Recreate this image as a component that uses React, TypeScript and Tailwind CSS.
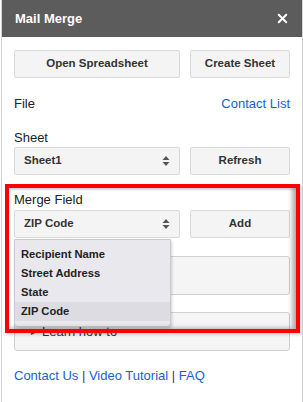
import { X } from 'lucide-react';

const btn =
  'h-[28px] flex items-center justify-center rounded-[2px] border border-[#d9d9d9] bg-[#f4f4f4] text-[11.5px] font-bold text-[#333]';

function UpDown() {
  return (
    <svg width="8" height="12" viewBox="0 0 8 12" className="shrink-0">
      <path d="M4 1 L7.5 5 H0.5 Z" fill="#555" />
      <path d="M4 11 L7.5 7 H0.5 Z" fill="#555" />
    </svg>
  );
}

function SelectBox({ value }: { value: string }) {
  return (
    <div className="h-[28px] w-[166px] flex items-center justify-between rounded-[2px] border border-[#d9d9d9] bg-[#f4f4f4] pl-[9px] pr-[9px]">
      <span className="text-[11.5px] font-bold text-[#333]">{value}</span>
      <UpDown />
    </div>
  );
}

const OPTIONS = ['Recipient Name', 'Street Address', 'State', 'ZIP Code'];

export default function App() {
  return (
    <div className="relative w-[303px] h-[402px] overflow-hidden bg-white font-['Liberation_Sans',Arial,sans-serif]">
      <div className="ml-[1px] h-full border-l border-r border-[#d4d4d4] flex flex-col">
        {/* Title bar */}
        <div className="h-[37px] bg-[#5c5c5c] flex items-center justify-between pl-[13px] pr-[12px] shrink-0">
          <span className="text-[13px] font-bold text-white">Mail Merge</span>
          <X size={15} strokeWidth={3.2} className="text-white" />
        </div>

        <div className="px-[12px] flex flex-col">
          <div className="mt-[13px] flex gap-[10px]">
            <div className={`${btn} w-[166px]`}>Open Spreadsheet</div>
            <div className={`${btn} w-[100px]`}>Create Sheet</div>
          </div>

          <div className="mt-[18px] h-[16px] flex items-center justify-between text-[13px]">
            <span className="text-[#222]">File</span>
            <span className="text-[#1a5fd1]">Contact List</span>
          </div>

          <div className="mt-[18px] h-[16px] text-[13px] leading-[16px] text-[#222]">Sheet</div>
          <div className="mt-[1px] flex gap-[10px]">
            <SelectBox value="Sheet1" />
            <div className={`${btn} w-[100px]`}>Refresh</div>
          </div>

          <div className="mt-[17px] h-[16px] text-[13px] leading-[16px] text-[#222]">Merge Field</div>
          <div className="mt-[2px] flex gap-[10px]">
            <div className="relative">
              <SelectBox value="ZIP Code" />
              {/* open dropdown list */}
              <div className="absolute left-0 top-[29px] z-10 w-[157px] rounded-b-[4px] border border-[#c9c9cf] bg-[#e8e8ed] py-[5px] shadow-[1px_2px_3px_rgba(0,0,0,0.18)]">
                {OPTIONS.map((o) => (
                  <div
                    key={o}
                    className={`h-[19px] flex items-center pl-[6px] text-[11.2px] font-bold text-[#222] ${
                      o === 'ZIP Code' ? 'bg-[#dcdce2]' : ''
                    }`}
                  >
                    {o}
                  </div>
                ))}
              </div>
            </div>
            <div className={`${btn} w-[100px]`}>Add</div>
          </div>

          <div className="mt-[18px] h-[39px] rounded-[3px] border border-[#cfcfcf] bg-[#f5f5f5]" />

          <div className="mt-[17px] h-[39px] rounded-[3px] border border-[#cfcfcf] bg-[#f5f5f5] flex items-center pl-[16px] gap-[5px] text-[13px] text-[#333]">
            <span className="text-[8px]">▶</span>
            <span>Learn how to</span>
          </div>

          <div className="mt-[17px] h-[16px] text-[13px] leading-[16px]">
            <span className="text-[#1a5fd1]">Contact Us</span>
            <span className="text-[#5a2a6a]"> | </span>
            <span className="text-[#1a5fd1]">Video Tutorial</span>
            <span className="text-[#5a2a6a]"> | </span>
            <span className="text-[#1a5fd1]">FAQ</span>
          </div>
        </div>
      </div>

      {/* annotation highlight */}
      <div className="absolute left-[5px] top-[184px] z-20 w-[295px] h-[149px] border-4 border-[#ff0000] shadow-[inset_0_2px_2px_rgba(0,0,0,0.12),inset_-4px_-1px_4px_rgba(0,0,0,0.3),2px_2px_3px_rgba(0,0,0,0.15)] pointer-events-none" />
    </div>
  );
}
